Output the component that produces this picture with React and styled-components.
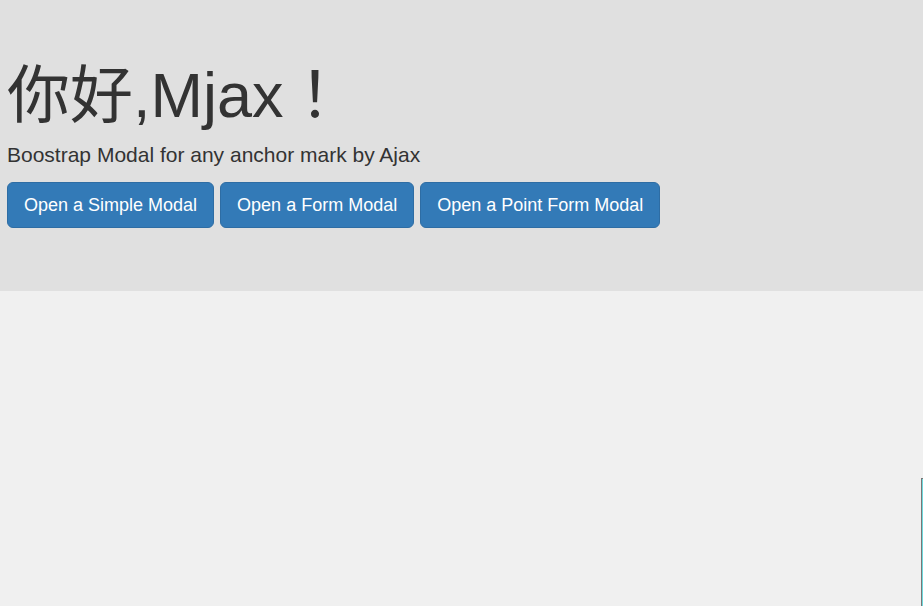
import React from "react";
import styled, { createGlobalStyle } from "styled-components";

const GlobalStyle = createGlobalStyle`
  html, body {
    margin: 0;
    padding: 0;
    background-color: #f0f0f0;
    font-family: "Liberation Sans", "Noto Sans CJK SC", sans-serif;
    color: #333;
  }
`;

const Page = styled.div`
  position: relative;
  width: 100%;
  height: 606px;
  overflow: hidden;
`;

const Jumbotron = styled.div`
  background-color: #e0e0e0;
  padding: 48px 7px 48px;
  box-sizing: border-box;
  height: 291px;
`;

const Title = styled.h1`
  margin: 7px 0 0;
  font-size: 63px;
  font-weight: 400;
  line-height: 69px;
  font-family: "Liberation Sans", "Noto Sans CJK SC", sans-serif;
`;

const Wide = styled.span`
  font-family: "Noto Sans CJK TC", sans-serif;
`;

const Lead = styled.p`
  margin: 13px 0 15px;
  font-size: 21px;
  line-height: 24px;
`;

const Actions = styled.div`
  display: flex;
  gap: 6px;
`;

const Button = styled.a`
  display: inline-block;
  padding: 10px 16px;
  font-size: 18px;
  line-height: 24px;
  color: #fff;
  background-color: #337ab7;
  border: 1px solid #2e6da4;
  border-radius: 6px;
  text-decoration: none;
  cursor: pointer;
`;

const EdgeLine = styled.div`
  position: absolute;
  right: 0;
  top: 478px;
  bottom: 0;
  width: 2px;
  background-color: #6fd8dc;
  border-left: 1px solid #777;
  border-top: 1px solid #777;
  box-sizing: border-box;
`;

export default function App() {
  const buttons = [
    "Open a Simple Modal",
    "Open a Form Modal",
    "Open a Point Form Modal",
  ];

  return (
    <Page>
      <GlobalStyle />
      <Jumbotron>
        <Title>
          你好,Mjax<Wide>！</Wide>
        </Title>
        <Lead>Boostrap Modal for any anchor mark by Ajax</Lead>
        <Actions>
          {buttons.map((label) => (
            <Button key={label}>{label}</Button>
          ))}
        </Actions>
      </Jumbotron>
      <EdgeLine />
    </Page>
  );
}
